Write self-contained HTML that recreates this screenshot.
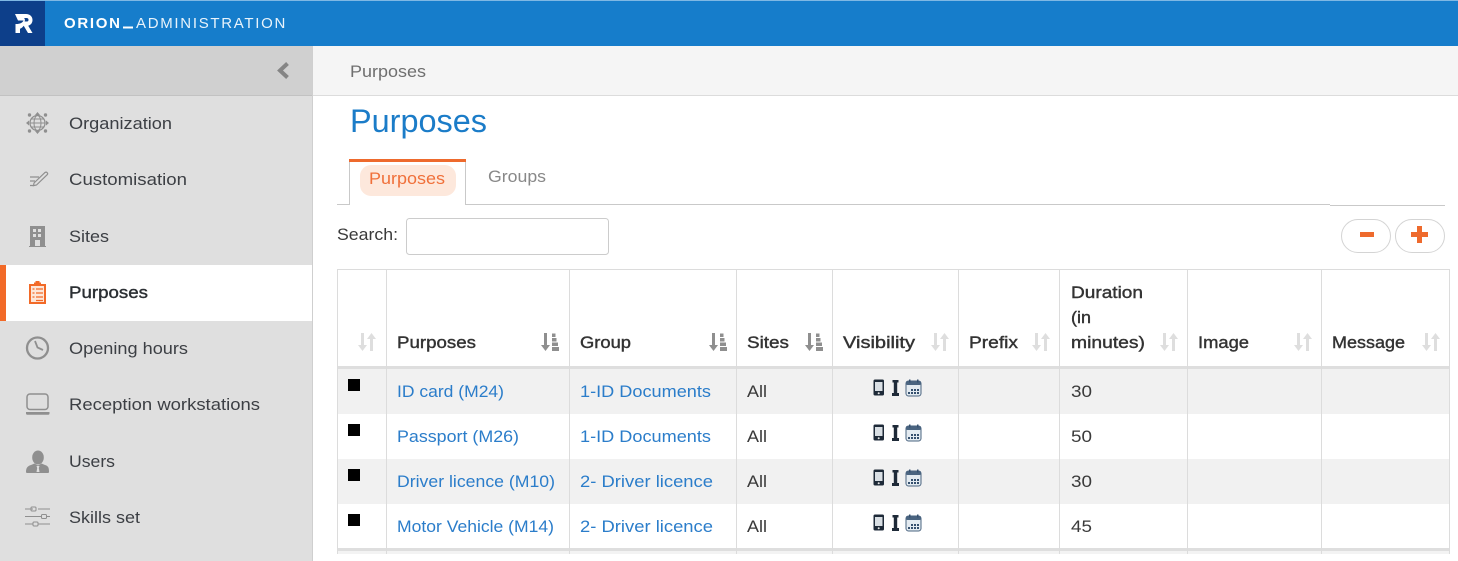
<!DOCTYPE html>
<html lang="en">
<head>
<meta charset="utf-8">
<title>Purposes</title>
<style>
html,body{margin:0;padding:0;background:#fff;width:1458px;height:561px;overflow:hidden}
svg{display:block}
text{font-family:"Liberation Sans",sans-serif;font-size:16.5px;fill:#3a3a3a;white-space:pre}
.nav{fill:#3c3f44}
.th{fill:#333;stroke:#333;stroke-width:.4px}
.lk{fill:#2b7dca}
.td{fill:#3a3a3a}
.ln{stroke:#dcdcdc;stroke-width:1;fill:none}
.ni{fill:#8f8f8f}
.ns{stroke:#8f8f8f;fill:none}
.s1{fill:#dedede}
.s2{fill:#8f8f8f}
</style>
</head>
<body>
<svg width="1458" height="561" viewBox="0 0 1458 561" xmlns="http://www.w3.org/2000/svg">
<defs>
  <g id="sort">
    <path class="s1" d="M3 0h3v12h3l-4.500 6-4.500-6h3z"/>
    <path class="s1" d="M13 0l4.500 6h-3v12h-3V6h-3z" transform="translate(0.500 0)"/>
  </g>
  <g id="sorta">
    <path class="s2" d="M3 0h3v12h3l-4.500 6-4.500-6h3z"/>
    <path class="s2" d="M11 0.500h3.500v3.500h-3.500zM11 5h4.500v3.500h-4.500zM11 9.500h6v3.500h-6zM11 14h7v4h-7z"/>
  </g>
  <g id="vis">
    <rect x="0.500" y="0.500" width="10.500" height="16" rx="1.500" fill="#1e2a38"/>
    <rect x="2" y="3" width="7.500" height="9" fill="#d9dfe4"/>
    <circle cx="5.700" cy="14.300" r="1" fill="#e6e6e6"/>
    <path d="M19.500 1h6v2.500h-1.300v10.500h1.800v3h-7v-3h1.800V3.500h-1.300z" fill="#1e2a38"/>
    <rect x="33" y="2" width="15" height="15" rx="2.500" fill="#e4ebf1" stroke="#4a6480" stroke-width="1"/>
    <rect x="33" y="2" width="15" height="4" rx="1.500" fill="#4a6480"/>
    <rect x="36" y="0.500" width="1.500" height="3" fill="#35506e"/>
    <rect x="44" y="0.500" width="1.500" height="3" fill="#35506e"/>
    <path d="M38 10h2v2h-2zM41 10h2v2h-2zM44 10h2v2h-2zM35 13h2v2h-2zM38 13h2v2h-2zM41 13h2v2h-2zM44 13h2v2h-2z" fill="#35506e"/>
  </g>
</defs>

<!-- top bar -->
<rect x="0" y="0" width="1458" height="46" fill="#167dcb"/>
<rect x="0" y="0" width="1458" height="1" fill="#7fb8e4"/>
<rect x="0" y="1" width="45" height="45" fill="#0d3f8a"/>
<path d="M15 14h11c4 0 6.500 2.500 6.500 6 0 3-1.700 5-4.300 5.700L32.500 33H28l-4.300-7.200c-1 1.500-2.200 2.500-3.700 3V33h-4.500V24c4 .2 7-1 8-3.500H18zM24 18c1.200 1 1 2.500.6 3.500h2.400c1.200 0 1.500-.7 1.500-1.700 0-1.100-.6-1.800-2-1.800z" fill="#fff"/>
<text x="64" y="28" style="font-size:15px;font-weight:bold;fill:#fff;letter-spacing:1.700px">ORION</text>
<rect x="123" y="26.500" width="10" height="2" fill="#fff"/>
<text x="136" y="28" style="font-size:15px;fill:#e8f3fb;letter-spacing:1.700px">ADMINISTRATION</text>

<!-- sidebar -->
<rect x="0" y="46" width="312" height="515" fill="#dfdfdf"/>
<rect x="0" y="46" width="312" height="49" fill="#d0d0d0"/>
<rect x="0" y="95" width="312" height="1" fill="#c2c2c2"/>
<rect x="312" y="46" width="1" height="515" fill="#cfcfcf"/>
<path d="M287.500 63.500l-7.500 7 7.500 7" fill="none" stroke="#858585" stroke-width="4"/>
<rect x="0" y="265" width="312" height="56" fill="#fff"/>
<rect x="0" y="265" width="6" height="56" fill="#f26a28"/>

<g>
  <!-- organization -->
  <circle class="ns" cx="37.500" cy="123" r="7.500" stroke-width="1.300"/>
  <ellipse class="ns" cx="37.500" cy="123" rx="3.500" ry="7.500" stroke-width="1"/>
  <path class="ns" d="M30 123h15M31 119h13M31 127h13" stroke-width="1"/>
  <path class="ni" d="M37.500 112l2.500 3h-5zM37.500 134l-2.500-3h5zM26 123l3-2.500v5zM49 123l-3-2.500v5z"/>
  <circle class="ni" cx="29.500" cy="115" r="1.700"/><circle class="ni" cx="45.500" cy="115" r="1.700"/>
  <circle class="ni" cx="29.500" cy="131" r="1.700"/><circle class="ni" cx="45.500" cy="131" r="1.700"/>
  <text class="nav" x="69" y="129" textLength="103" lengthAdjust="spacingAndGlyphs">Organization</text>

  <!-- customisation -->
  <path class="ns" d="M34 183l11-10.500c1.500-1.200 3.500 .8 2.200 2.200L36.500 185l-3 .7z" stroke-width="1.200"/>
  <path class="ns" d="M30 177h9M30 181h5M30 185.500h3" stroke-width="1.200"/>
  <text class="nav" x="69" y="185" textLength="118" lengthAdjust="spacingAndGlyphs">Customisation</text>

  <!-- sites -->
  <path class="ni" d="M30 226h15v20h1v1H29v-1h1z"/>
  <path d="M33 229h3v3h-3zM38 229h3v3h-3zM33 234h3v3h-3zM38 234h3v3h-3zM35 240h5v6h-5z" fill="#dfdfdf"/>
  <text class="nav" x="69" y="242" textLength="40" lengthAdjust="spacingAndGlyphs">Sites</text>

  <!-- purposes -->
  <path d="M29 284h5v-1.500h1.500v-1.500h4v1.500H41v1.500h5v20H29z" fill="#f26a28"/>
  <rect x="31" y="286" width="13" height="16" fill="#fde6d8"/>
  <path d="M36 289h7M36 293h7M36 297h7M36 300.500h7" stroke="#f26a28" stroke-width="1.300"/>
  <path d="M32.500 289h2M32.500 293h2M32.500 297h2" stroke="#f26a28" stroke-width="1.300"/>
  <text x="69" y="298" textLength="79" lengthAdjust="spacingAndGlyphs" style="fill:#2b2f33;stroke:#2b2f33;stroke-width:.4px">Purposes</text>

  <!-- opening hours -->
  <circle class="ns" cx="37.500" cy="348" r="10.500" stroke-width="2.300"/>
  <path class="ns" d="M35 341l2.500 6.500 5.500 2.500" stroke-width="1.800"/>
  <text class="nav" x="69" y="354" textLength="119" lengthAdjust="spacingAndGlyphs">Opening hours</text>

  <!-- reception -->
  <rect class="ns" x="27" y="394" width="21" height="15.500" rx="3" stroke-width="1.500"/>
  <path class="ni" d="M26 412h23.500v1.500c0 .8-.6 1.200-1.200 1.200H27.200c-.7 0-1.200-.4-1.200-1.200z"/>
  <text class="nav" x="69" y="410" textLength="191" lengthAdjust="spacingAndGlyphs">Reception workstations</text>

  <!-- users -->
  <ellipse class="ni" cx="38" cy="457.500" rx="5.800" ry="7"/>
  <path class="ni" d="M26 472c0-4 1.500-6 5-7l3.500-1.500 3.500 2 3.500-2L45 465c3.500 1 4 3 4 7 0 .5-.5 1-1 1H27c-.5 0-1-.5-1-1z"/>
  <path d="M36.500 466h3l-.7 2 .7 4h-3l.7-4z" fill="#dfdfdf"/>
  <text class="nav" x="69" y="467" textLength="46" lengthAdjust="spacingAndGlyphs">Users</text>

  <!-- skills -->
  <path class="ns" d="M25 509h8M38 509h12M25 516.500h16M46 516.500h4M25 524h8M38 524h12" stroke-width="1"/>
  <rect class="ns" x="31" y="507" width="5" height="4" rx="1"/>
  <rect class="ns" x="41.500" y="514.500" width="5" height="4" rx="1"/>
  <rect class="ns" x="33" y="522" width="5" height="4" rx="1"/>
  <text class="nav" x="69" y="523" textLength="71" lengthAdjust="spacingAndGlyphs">Skills set</text>
</g>

<!-- breadcrumb -->
<rect x="313" y="46" width="1145" height="49" fill="#f5f5f5"/>
<rect x="313" y="95" width="1145" height="1" fill="#dcdcdc"/>
<text x="350" y="77" textLength="76" lengthAdjust="spacingAndGlyphs" style="fill:#6f6f6f">Purposes</text>

<!-- title -->
<text x="350" y="132" textLength="137" lengthAdjust="spacingAndGlyphs" style="font-size:32px;fill:#1b7cc8">Purposes</text>

<!-- tabs -->
<path d="M337 204.500h12.500V160.500M465.500 160.500V204.500H1330" fill="none" stroke="#c9c9c9"/>
<path d="M1330 205.500h115" fill="none" stroke="#c9c9c9"/>
<rect x="349" y="159" width="117" height="3" fill="#ee6a2d"/>
<rect x="360" y="165" width="96" height="31" rx="11" fill="#fde8dc"/>
<text x="369" y="184" textLength="76" lengthAdjust="spacingAndGlyphs" style="fill:#f0703a">Purposes</text>
<text x="488" y="182" textLength="58" lengthAdjust="spacingAndGlyphs" style="fill:#888">Groups</text>

<!-- search -->
<text x="337" y="240" textLength="61" lengthAdjust="spacingAndGlyphs" style="fill:#3a3a3a">Search:</text>
<rect x="406.500" y="218.500" width="202" height="36" rx="3" fill="#fff" stroke="#cccccc"/>

<!-- buttons -->
<rect x="1341.500" y="219.500" width="49" height="33" rx="16.500" fill="#fff" stroke="#d4d4d4"/>
<rect x="1395.500" y="219.500" width="49" height="33" rx="16.500" fill="#fff" stroke="#d4d4d4"/>
<rect x="1360" y="232" width="14" height="5" fill="#ee6a2d"/>
<path d="M1417 226h5v6h6v5h-6v6h-5v-6h-6v-5h6z" fill="#ee6a2d"/>

<!-- table -->
<rect x="338" y="369" width="1111" height="45" fill="#f1f1f1"/>
<rect x="338" y="459" width="1111" height="45" fill="#f1f1f1"/>
<rect x="338" y="551" width="1111" height="3" fill="#f3f3f3"/>
<rect x="337" y="366" width="1112" height="3" fill="#dedede"/>
<rect x="337" y="548" width="1112" height="3" fill="#dedede"/>
<path class="ln" d="M337 269.500H1450"/>
<path class="ln" d="M337.500 269V554M386.500 269V554M569.500 269V554M736.500 269V554M832.500 269V554M958.500 269V554M1059.500 269V554M1187.500 269V554M1321.500 269V554M1449.500 269V554"/>

<!-- head -->
<text class="th" x="397" y="348" textLength="79" lengthAdjust="spacingAndGlyphs">Purposes</text>
<text class="th" x="580" y="348" textLength="51" lengthAdjust="spacingAndGlyphs">Group</text>
<text class="th" x="747" y="348" textLength="42" lengthAdjust="spacingAndGlyphs">Sites</text>
<text class="th" x="843" y="348" textLength="72" lengthAdjust="spacingAndGlyphs">Visibility</text>
<text class="th" x="969" y="348" textLength="49" lengthAdjust="spacingAndGlyphs">Prefix</text>
<text class="th" x="1071" y="298" textLength="72" lengthAdjust="spacingAndGlyphs">Duration</text>
<text class="th" x="1071" y="323" textLength="20" lengthAdjust="spacingAndGlyphs">(in</text>
<text class="th" x="1071" y="348" textLength="74" lengthAdjust="spacingAndGlyphs">minutes)</text>
<text class="th" x="1198" y="348" textLength="51" lengthAdjust="spacingAndGlyphs">Image</text>
<text class="th" x="1332" y="348" textLength="73" lengthAdjust="spacingAndGlyphs">Message</text>

<use href="#sort" x="358" y="333"/>
<use href="#sorta" x="541" y="333"/>
<use href="#sorta" x="709" y="333"/>
<use href="#sorta" x="805" y="333"/>
<use href="#sort" x="931" y="333"/>
<use href="#sort" x="1032" y="333"/>
<use href="#sort" x="1160" y="333"/>
<use href="#sort" x="1294" y="333"/>
<use href="#sort" x="1422" y="333"/>

<!-- rows -->
<rect x="348" y="379" width="12" height="12" fill="#000"/>
<rect x="348" y="424" width="12" height="12" fill="#000"/>
<rect x="348" y="469" width="12" height="12" fill="#000"/>
<rect x="348" y="514" width="12" height="12" fill="#000"/>

<text class="lk" x="397" y="397" textLength="107" lengthAdjust="spacingAndGlyphs">ID card (M24)</text>
<text class="lk" x="580" y="397" textLength="131" lengthAdjust="spacingAndGlyphs">1-ID Documents</text>
<text class="td" x="747" y="397" textLength="20" lengthAdjust="spacingAndGlyphs">All</text>
<use href="#vis" x="873" y="379"/>
<text class="td" x="1071" y="397" textLength="21" lengthAdjust="spacingAndGlyphs">30</text>

<text class="lk" x="397" y="442" textLength="122" lengthAdjust="spacingAndGlyphs">Passport (M26)</text>
<text class="lk" x="580" y="442" textLength="131" lengthAdjust="spacingAndGlyphs">1-ID Documents</text>
<text class="td" x="747" y="442" textLength="20" lengthAdjust="spacingAndGlyphs">All</text>
<use href="#vis" x="873" y="424"/>
<text class="td" x="1071" y="442" textLength="21" lengthAdjust="spacingAndGlyphs">50</text>

<text class="lk" x="397" y="487" textLength="158" lengthAdjust="spacingAndGlyphs">Driver licence (M10)</text>
<text class="lk" x="580" y="487" textLength="133" lengthAdjust="spacingAndGlyphs">2- Driver licence</text>
<text class="td" x="747" y="487" textLength="20" lengthAdjust="spacingAndGlyphs">All</text>
<use href="#vis" x="873" y="469"/>
<text class="td" x="1071" y="487" textLength="21" lengthAdjust="spacingAndGlyphs">30</text>

<text class="lk" x="397" y="532" textLength="157" lengthAdjust="spacingAndGlyphs">Motor Vehicle (M14)</text>
<text class="lk" x="580" y="532" textLength="133" lengthAdjust="spacingAndGlyphs">2- Driver licence</text>
<text class="td" x="747" y="532" textLength="20" lengthAdjust="spacingAndGlyphs">All</text>
<use href="#vis" x="873" y="514"/>
<text class="td" x="1071" y="532" textLength="21" lengthAdjust="spacingAndGlyphs">45</text>
</svg>
</body>
</html>
